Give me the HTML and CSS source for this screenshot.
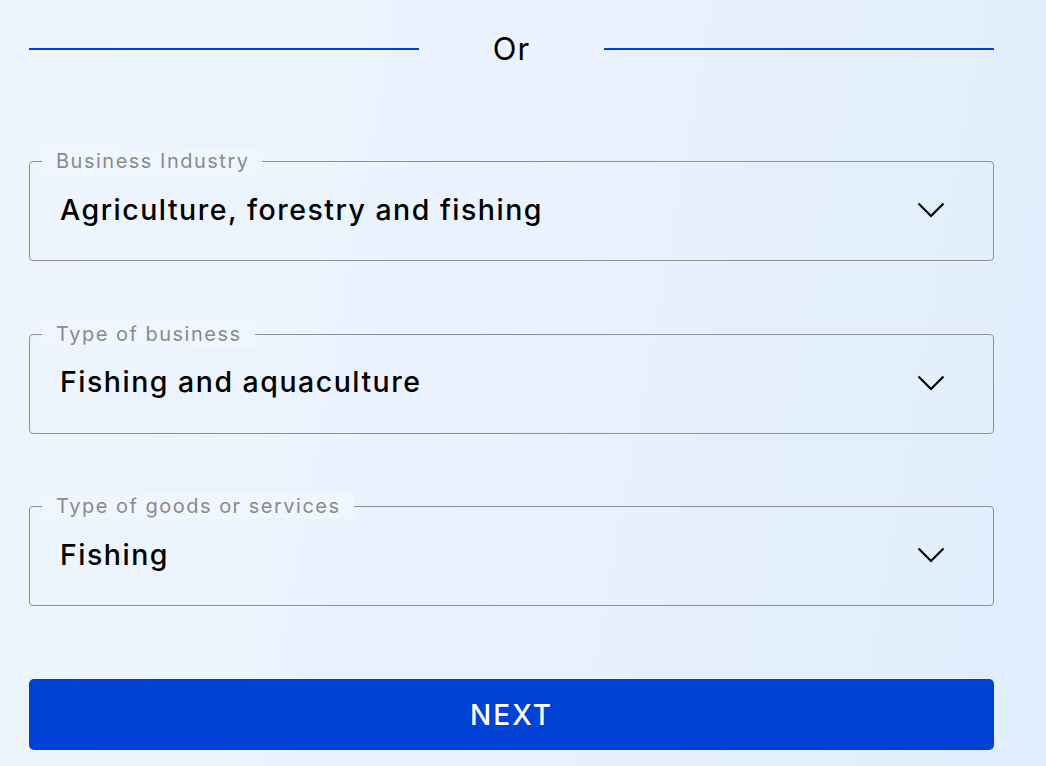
FILE: index.html
```html
<!DOCTYPE html>
<html lang="en">
<head>
<meta charset="utf-8">
<title>Business details</title>
<link rel="stylesheet" href="styles.css">
</head>
<body>
<main class="page">
  <div class="divider">
    <span class="divider-line"></span>
    <span class="divider-text">Or</span>
    <span class="divider-line"></span>
  </div>

  <div class="fields">
    <div class="field">
      <span class="field-label">Business Industry</span>
      <span class="field-value">Agriculture, forestry and fishing</span>
      <svg class="chevron" width="28" height="16" viewBox="0 0 28 16"><polyline points="1.5,1.5 14,14 26.5,1.5" fill="none" stroke="#000" stroke-width="2.2"/></svg>
    </div>
    <div class="field">
      <span class="field-label">Type of business</span>
      <span class="field-value">Fishing and aquaculture</span>
      <svg class="chevron" width="28" height="16" viewBox="0 0 28 16"><polyline points="1.5,1.5 14,14 26.5,1.5" fill="none" stroke="#000" stroke-width="2.2"/></svg>
    </div>
    <div class="field">
      <span class="field-label">Type of goods or services</span>
      <span class="field-value">Fishing</span>
      <svg class="chevron" width="28" height="16" viewBox="0 0 28 16"><polyline points="1.5,1.5 14,14 26.5,1.5" fill="none" stroke="#000" stroke-width="2.2"/></svg>
    </div>
  </div>

  <button class="next-btn" type="button">NEXT</button>
</main>
</body>
</html>
```

FILE: styles.css
```css
* { box-sizing: border-box; }

html, body {
  margin: 0;
  padding: 0;
  height: 100%;
}

body {
  background: linear-gradient(100deg, #eef5fe 0%, #e9f2fd 50%, #e0edfc 100%);
  font-family: Inter, "Noto Sans", sans-serif;
  color: #000;
}

.page {
  width: 965px;
  margin-left: 29px;
  padding-top: 18px;
  display: flex;
  flex-direction: column;
}

.divider {
  display: flex;
  align-items: center;
  height: 61px;
}

.divider-line {
  flex: 0 0 390px;
  height: 2px;
  background: #0040d8;
}

.divider-text {
  flex: 1;
  text-align: center;
  font-size: 31px;
  font-weight: 400;
  letter-spacing: 1px;
  line-height: 1;
}

.fields {
  display: flex;
  flex-direction: column;
  gap: 72.5px;
  margin-top: 82px;
}

.field {
  position: relative;
  height: 100px;
  border: 1px solid #8c9098;
  border-radius: 4px;
  display: flex;
  align-items: center;
  justify-content: space-between;
  padding: 0 48px 0 30px;
}

.field-label {
  position: absolute;
  left: 12px;
  top: -14px;
  height: 26px;
  padding: 0 13px 0 14px;
  background: #f0f6fe;
  color: #8a8a8a;
  font-size: 20px;
  letter-spacing: 1.5px;
  line-height: 26px;
}

.field-value {
  font-size: 28.5px;
  font-weight: 500;
  letter-spacing: 1.5px;
  line-height: 1;
  margin-top: -2px;
}

.chevron {
  display: block;
  margin-top: -2px;
}

.next-btn {
  margin-top: 73px;
  height: 71px;
  width: 100%;
  border: none;
  border-radius: 5px;
  background: #0041d6;
  color: #fff;
  font-family: Inter, "Noto Sans", sans-serif;
  font-size: 28px;
  font-weight: 500;
  letter-spacing: 2px;
  cursor: pointer;
}
```
